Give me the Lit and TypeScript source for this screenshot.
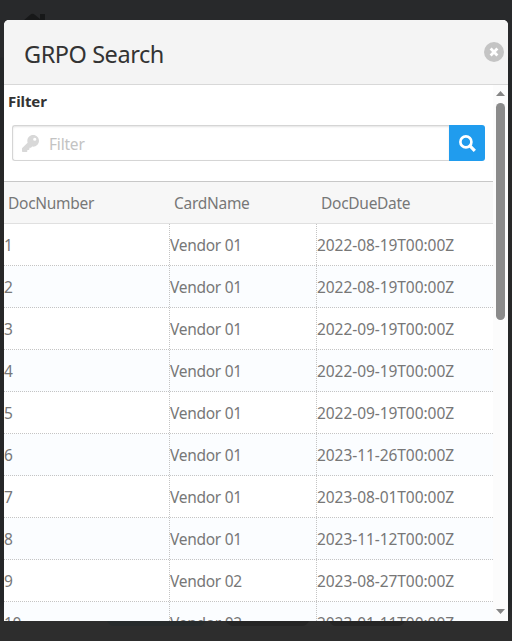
import { LitElement, html, css } from "lit";
import { customElement, state } from "lit/decorators.js";

interface Doc {
  num: number;
  card: string;
  due: string;
}

@customElement("app-root")
export class AppRoot extends LitElement {
  static styles = css`
    :host {
      display: block;
      position: relative;
      box-sizing: border-box;
      width: 512px;
      height: 641px;
      padding: 20px 4px;
      overflow: hidden;
      background: linear-gradient(#28292b 0, #28292b 57px, #242628 58px, #252627 130px, #282828 190px, #242628 600px, #2d2d2d 622px);
      font-family: "Noto Sans", "Open Sans", sans-serif;
      color: #777;
    }
    .home {
      position: absolute;
      left: 23px;
      top: 13px;
      width: 24px;
      height: 20px;
      fill: #171819;
    }
    .tabs {
      position: absolute;
      left: 107px;
      top: 612px;
      display: flex;
      gap: 20px;
    }
    .tab {
      width: 99px;
      height: 14px;
      border-radius: 7px;
      background: #252525;
    }
    .tab.green { background: #272b2c; }
    .tab.wide { width: 83px; }
    .tab.last { width: 76px; }
    .dialog {
      position: relative;
      display: flex;
      flex-direction: column;
      height: 601px;
      border-radius: 5px 5px 0 0;
      overflow: hidden;
      background: #fff;
    }
    .head {
      box-sizing: border-box;
      flex: none;
      height: 65px;
      padding: 3px 4px 0 20px;
      display: flex;
      align-items: center;
      justify-content: space-between;
      background: #f4f4f4;
      border-bottom: 1px solid #d8d8d8;
    }
    .title {
      font-size: 23.5px;
      line-height: 30px;
      letter-spacing: -0.45px;
      color: #333;
    }
    .close { width: 20px; height: 20px; margin-top: -3px; display: block; }
    .body { flex: 1; min-height: 0; display: flex; }
    .content { flex: 1; min-width: 0; overflow: hidden; }
    .label {
      height: 40px;
      padding-left: 4px;
      font-size: 15px;
      line-height: 32px;
      font-weight: 700;
      letter-spacing: -0.1px;
      color: #333;
    }
    .search { display: flex; height: 36px; margin: 0 8px 20px; }
    .field {
      flex: 1;
      box-sizing: border-box;
      display: flex;
      align-items: center;
      border: 1px solid #d5d5d5;
      border-right: 0;
      border-radius: 3px 0 0 3px;
      box-shadow: inset 0 1px 2px #0000001c;
      padding: 2px 0 0 9px;
      font-size: 15.5px;
      letter-spacing: -0.2px;
      color: #c3c3c3;
    }
    .key { width: 17px; height: 17px; margin: -2px 10px 0 0; fill: #d8d8d8; }
    .go {
      width: 36px;
      display: flex;
      align-items: center;
      justify-content: center;
      background: #209cee;
      border-radius: 0 3px 3px 0;
    }
    .row {
      box-sizing: border-box;
      display: grid;
      grid-template-columns: 165px 147px 1fr;
      height: 42px;
      border-bottom: 1px dotted #c4c4c4;
      font-size: 15.5px;
      letter-spacing: -0.28px;
      line-height: 43px;
      white-space: nowrap;
    }
    .row.even { background: #fbfdff; }
    .cell + .cell { border-left: 1px dotted #c4c4c4; }
    .cell.due { letter-spacing: -0.06px; }
    .row.header {
      height: 43px;
      line-height: 43px;
      background: #f7f7f7;
      border-top: 1px solid #c8c8c8;
      border-bottom: 1px solid #e0e0e0;
    }
    .row.header .cell { padding-left: 4px; border-color: transparent; }
    .bar {
      width: 15px;
      display: flex;
      flex-direction: column;
      align-items: center;
      background: #fcfcfc;
      box-sizing: border-box;
      padding: 6px 0 7px;
    }
    .arrow { width: 9px; height: 5px; fill: #858585; display: block; }
    .thumb { width: 9px; height: 217px; margin: 7px 0 auto; border-radius: 5px; background: #8b8b8b; }
  `;

  @state() private docs: Doc[] = [
    { num: 1, card: "Vendor 01", due: "2022-08-19T00:00Z" },
    { num: 2, card: "Vendor 01", due: "2022-08-19T00:00Z" },
    { num: 3, card: "Vendor 01", due: "2022-09-19T00:00Z" },
    { num: 4, card: "Vendor 01", due: "2022-09-19T00:00Z" },
    { num: 5, card: "Vendor 01", due: "2022-09-19T00:00Z" },
    { num: 6, card: "Vendor 01", due: "2023-11-26T00:00Z" },
    { num: 7, card: "Vendor 01", due: "2023-08-01T00:00Z" },
    { num: 8, card: "Vendor 01", due: "2023-11-12T00:00Z" },
    { num: 9, card: "Vendor 02", due: "2023-08-27T00:00Z" },
    { num: 10, card: "Vendor 02", due: "2023-01-11T00:00Z" },
  ];

  render() {
    return html`
      <svg class="home" viewBox="0 0 24 20"><path d="M0 8 7.500 1.500Q9.500 0 11.500 1.500L17 6V1h5v10l2 2v7H3v-9z" /></svg>
      <div class="tabs"><div class="tab green"></div><div class="tab wide"></div><div class="tab last"></div></div>
      <div class="dialog">
        <div class="head">
          <div class="title">GRPO Search</div>
          <svg class="close" viewBox="0 0 20 20">
            <circle cx="10" cy="10" r="10" fill="#c4c4c4" />
            <path d="M6.600 6.600l6.800 6.800M13.400 6.600l-6.800 6.800" stroke="#fff" stroke-width="2.800" />
          </svg>
        </div>
        <div class="body">
          <div class="content">
            <div class="label">Filter</div>
            <div class="search">
              <div class="field">
                <svg class="key" viewBox="0 0 512 512">
                  <path d="M512 176c0 97.200-78.800 176-176 176-11.200 0-22.200-1.100-32.800-3.100l-24 27a24 24 0 0 1-18 8.100H224v40a24 24 0 0 1-24 24h-40v40a24 24 0 0 1-24 24H24a24 24 0 0 1-24-24v-78a24 24 0 0 1 7-17l161.800-161.800A176 176 0 0 1 160 176C160 78.800 238.800 0 336 0s176 78.500 176 176zm-176-48a48 48 0 1 0 96 0 48 48 0 0 0-96 0z" />
                </svg>
                <span>Filter</span>
              </div>
              <div class="go">
                <svg width="17" height="17" viewBox="0 0 16 16" fill="none" stroke="#fff">
                  <circle cx="6.500" cy="6.500" r="5.200" stroke-width="2.500" />
                  <path d="M10.300 10.300l4.600 4.600" stroke-width="3" />
                </svg>
              </div>
            </div>
            <div class="row header">
              <div class="cell">DocNumber</div><div class="cell">CardName</div><div class="cell">DocDueDate</div>
            </div>
            ${this.docs.map(
              (d, i) => html`<div class="row ${i % 2 ? "even" : ""}">
                <div class="cell">${d.num}</div><div class="cell">${d.card}</div><div class="cell due">${d.due}</div>
              </div>`
            )}
          </div>
          <div class="bar">
            <svg class="arrow" viewBox="0 0 9 5"><path d="M0 5 4.500 0 9 5z" /></svg>
            <div class="thumb"></div>
            <svg class="arrow" viewBox="0 0 9 5"><path d="M0 0h9L4.500 5z" /></svg>
          </div>
        </div>
      </div>
    `;
  }
}
